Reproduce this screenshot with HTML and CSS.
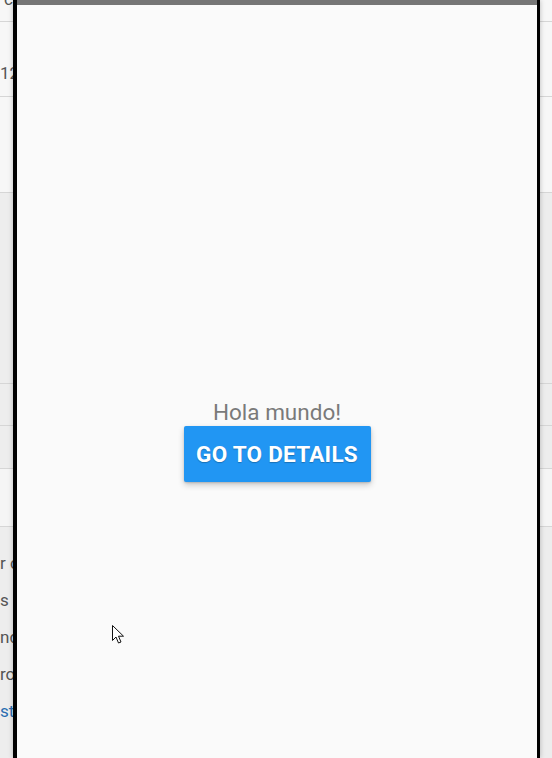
FILE: index.html
```
<!DOCTYPE html>
<html>
<head>
<meta charset="utf-8">
<link rel="stylesheet" href="styles.css">
</head>
<body>
<div class="page">
  <div class="row r1"><span class="txt up">c</span></div>
  <div class="row r2"><span class="txt">12</span></div>
  <div class="row r3"></div>
  <div class="row r4 gray"></div>
  <div class="row r5 gray"></div>
  <div class="row r6 gray"></div>
  <div class="row r7"></div>
  <div class="lines">
    <p class="txt">r c</p>
    <p class="txt">s</p>
    <p class="txt">nd</p>
    <p class="txt">ro</p>
    <p class="txt link">st</p>
  </div>
</div>

<div class="phone">
  <div class="statusbar"></div>
  <div class="screen">
    <div class="center">
      <p class="hello">Hola mundo!</p>
      <button class="btn">GO TO DETAILS</button>
    </div>
  </div>
</div>

<svg class="cursor" width="13" height="20" viewBox="0 0 13 20">
  <path d="M0.5 0.5 L0.5 15.5 L4 12 L6.5 18 L9 17 L6.5 11.2 L11.5 11.2 Z" fill="#fff" stroke="#111" stroke-width="1" stroke-linejoin="miter"/>
</svg>
</body>
</html>
```
FILE: styles.css
```
html, body {
  margin: 0;
  padding: 0;
  width: 552px;
  height: 758px;
  overflow: hidden;
  background: #f4f4f4;
  font-family: Roboto, "Liberation Sans", sans-serif;
}

.page {
  width: 552px;
}

.row {
  box-sizing: border-box;
  border-bottom: 1px solid #d6d6d6;
  background: #f7f7f7;
  overflow: hidden;
}

.row.gray { background: #ededed; }

.r1 { height: 22px; }
.r2 { height: 75px; padding-top: 41px; }
.r3 { height: 96px; }
.r4 { height: 191px; }
.r5 { height: 42px; }
.r6 { height: 43px; }
.r7 { height: 58px; background: #f5f5f5; }

.txt {
  display: block;
  margin: 0;
  color: #555;
  font-size: 17px;
  line-height: 20px;
  white-space: nowrap;
}

.up { margin-top: -11px; margin-left: 4px; }

.lines {
  background: #ededed;
  padding-top: 18px;
  height: 231px;
  box-sizing: border-box;
}

.lines .txt {
  line-height: 37px;
  height: 37px;
}

.lines .link { color: #2a6db0; }

.phone {
  position: absolute;
  left: 13px;
  top: 0;
  width: 520px;
  height: 758px;
  border-left: 4px solid #000;
  border-right: 3px solid #000;
  display: flex;
  flex-direction: column;
  background: #fafafa;
  box-shadow: 0 0 5px rgba(0,0,0,0.25);
}

.statusbar {
  height: 5px;
  background: #767676;
}

.screen {
  flex: 1;
  background: #fafafa;
}

.center {
  display: flex;
  flex-direction: column;
  align-items: center;
  padding-top: 394px;
}

.hello {
  margin: 0;
  font-size: 22.5px;
  line-height: 26px;
  color: #7a7a7a;
}

.btn {
  margin-top: 1px;
  width: 187px;
  height: 56px;
  border: none;
  border-radius: 2px;
  background: #2196f3;
  color: #fff;
  font-family: Roboto, "Liberation Sans", sans-serif;
  font-weight: 700;
  font-size: 22.5px;
  letter-spacing: 0.25px;
  padding: 0;
  text-shadow: 0 1px 1px rgba(0,0,0,0.25);
  box-shadow: 0 3px 6px rgba(0,0,0,0.2), 0 1px 2px rgba(0,0,0,0.15);
}

.cursor {
  position: absolute;
  left: 112px;
  top: 625px;
}
```
